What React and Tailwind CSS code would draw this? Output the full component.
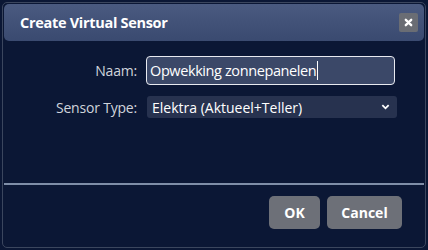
import React from 'react';

const font = { fontFamily: '"Open Sans", "Noto Sans", sans-serif' };

export default function App() {
  return (
    <div className="w-[428px] h-[250px] bg-[#0b1735] p-[2px] overflow-hidden" style={font}>
      <div className="h-full w-full rounded-[5px] border border-[#3b465e] flex flex-col">
        {/* Header */}
        <div className="mx-[1px] mt-[1px] h-[37px] rounded-[5px] bg-gradient-to-b from-[#4a5a80] to-[#3a4a70] flex items-center justify-between pl-[16px] pr-[6px]">
          <span className="text-white font-bold text-[14.5px] tracking-[-0.3px]">Create Virtual Sensor</span>
          <button className="w-[19px] h-[19px] rounded-[2px] bg-[#6a6d74] flex items-center justify-center">
            <svg width="9" height="9" viewBox="0 0 10 10">
              <path d="M2 2 L8 8 M8 2 L2 8" stroke="white" strokeWidth="2.6" strokeLinecap="round" />
            </svg>
          </button>
        </div>

        {/* Form */}
        <div className="flex-1 flex flex-col pt-[15px] gap-[11px]">
          <div className="flex items-center">
            <label className="w-[134px] text-right text-[14px] tracking-[-0.2px] text-[#d0d4dc]">Naam:</label>
            <div className="ml-[9px] w-[249px] h-[29px] rounded-[4px] border-[1.5px] border-[#e8eaf0] bg-[#3b4868] flex items-center pl-[3px]">
              <span className="text-white text-[14.5px] tracking-[-0.4px]">Opwekking zonnepanelen</span>
              <span className="w-[1px] h-[19px] bg-white ml-[1px]" />
            </div>
          </div>
          <div className="flex items-center">
            <label className="w-[134px] text-right text-[14px] tracking-[-0.2px] text-[#d0d4dc]">Sensor Type:</label>
            <div className="ml-[10px] w-[250px] h-[22px] rounded-[3px] bg-[#27324f] flex items-center justify-between pl-[5px] pr-[7px]">
              <span className="text-white text-[14px]">Elektra (Aktueel+Teller)</span>
              <svg width="9" height="6" viewBox="0 0 10 6">
                <path d="M1.5 1 L5 4.5 L8.5 1" stroke="white" strokeWidth="2" fill="none" />
              </svg>
            </div>
          </div>
        </div>

        {/* Footer */}
        <div className="h-[2px] bg-[#7f8ea8] mx-[1px]" />
        <div className="h-[62px] flex items-start justify-end gap-[7px] pt-[11px] pr-[23px]">
          <button className="w-[51px] h-[33px] rounded-[5px] bg-[#6d7078] text-white font-bold text-[14px]">OK</button>
          <button className="w-[75px] h-[33px] rounded-[5px] bg-[#6d7078] text-white font-bold text-[14px]">Cancel</button>
        </div>
      </div>
    </div>
  );
}
